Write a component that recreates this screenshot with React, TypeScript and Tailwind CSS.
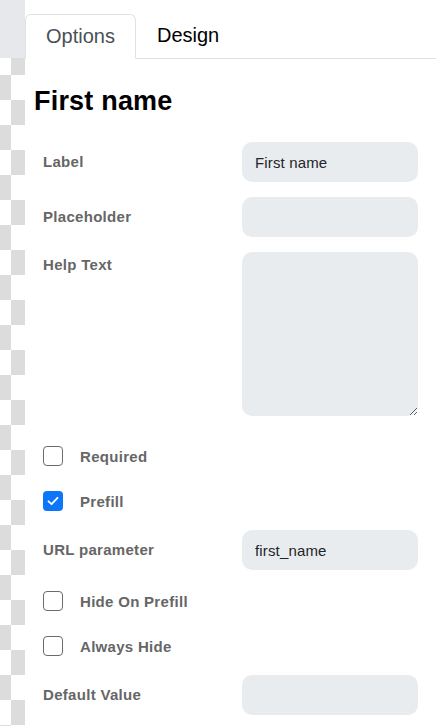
import React from "react";

const font = { fontFamily: '"Liberation Sans", Arial, sans-serif' };

function Checker() {
  const cells = [];
  for (let i = 0; i < 28; i++) {
    const left = i % 2 === 1;
    cells.push(
      <div key={i} className="flex h-[25px] w-[25px]">
        <div className={left ? "w-[11px] h-full bg-[#dcdcdc]" : "w-[11px] h-full bg-white"} />
        <div className={left ? "w-[14px] h-full bg-white" : "w-[14px] h-full bg-[#dcdcdc]"} />
      </div>
    );
  }
  return (
    <div className="relative w-[25px] shrink-0 overflow-hidden h-[726px]">
      <div className="absolute left-0 top-[50px] flex flex-col">{cells}</div>
      <div className="absolute left-0 top-0 w-[25px] h-[58px] bg-[#e6e8eb]" />
    </div>
  );
}

function Field({ label, value }: { label: string; value?: string }) {
  return (
    <div className="flex items-center h-[40px]">
      <div className="w-[199px] text-[15px] font-bold text-[#666] leading-5 tracking-[0.3px]">{label}</div>
      <input
        readOnly
        value={value ?? ""}
        className="w-[176px] h-[40px] rounded-[10px] bg-[#e9ecef] px-[13px] text-[15px] text-[#212529] outline-none tracking-[0.15px]"
        style={font}
      />
    </div>
  );
}

function Check({ label, checked }: { label: string; checked?: boolean }) {
  return (
    <div className="flex items-center h-[30px]">
      {checked ? (
        <div className="w-[20px] h-[20px] rounded-[4px] bg-[#0b76fa] flex items-center justify-center">
          <svg width="14" height="14" viewBox="0 0 14 14" fill="none">
            <path d="M2.5 7.3 L5.6 10.2 L11.5 3.8" stroke="white" strokeWidth="1.8" strokeLinecap="round" strokeLinejoin="round" />
          </svg>
        </div>
      ) : (
        <div className="w-[20px] h-[20px] rounded-[4px] border border-[#6b6b6b] bg-white" />
      )}
      <span className="ml-[17px] mt-[1px] text-[15px] font-bold text-[#666] leading-5 tracking-[0.3px]">{label}</span>
    </div>
  );
}

export default function App() {
  return (
    <div className="flex w-[436px] h-[726px] overflow-hidden bg-white" style={font}>
      <Checker />
      <div className="flex-1 flex flex-col">
        <div className="flex items-end h-[59px] border-b border-[#dee2e6]">
          <div className="h-[45px] pb-[1px] px-[20px] border border-[#dee2e6] border-b-white rounded-t-[6px] -mb-px bg-white flex items-center text-[20px] text-[#495057]">
            Options
          </div>
          <div className="h-[45px] pb-[1px] px-[21px] flex items-center text-[20px] text-black">Design</div>
        </div>
        <h2 className="mt-[26px] ml-[9px] text-[27px] font-bold text-black leading-8 tracking-[0.2px]">First name</h2>
        <div className="pl-[18px] mt-[25px] flex flex-col">
          <Field label="Label" value="First name" />
          <div className="h-[15px]" />
          <Field label="Placeholder" />
          <div className="h-[15px]" />
          <div className="flex items-start">
            <div className="w-[199px] mt-[3px] text-[15px] font-bold text-[#666] leading-5 tracking-[0.3px]">Help Text</div>
            <textarea
              readOnly
              className="w-[176px] h-[164px] rounded-[10px] bg-[#e9ecef] px-[13px] py-2 text-[15px] outline-none resize-y block"
            />
          </div>
          <div className="h-[25px]" />
          <Check label="Required" />
          <div className="h-[15px]" />
          <Check label="Prefill" checked />
          <div className="h-[14px]" />
          <Field label="URL parameter" value="first_name" />
          <div className="h-[16px]" />
          <Check label="Hide On Prefill" />
          <div className="h-[15px]" />
          <Check label="Always Hide" />
          <div className="h-[14px]" />
          <Field label="Default Value" />
        </div>
      </div>
    </div>
  );
}
